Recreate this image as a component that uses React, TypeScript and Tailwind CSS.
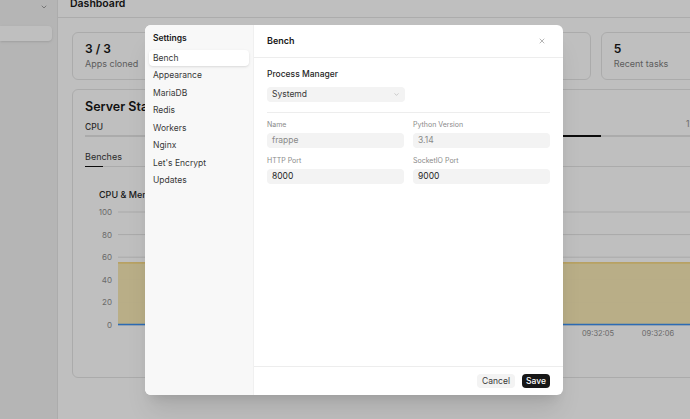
import { ChevronDown, X } from "lucide-react";

const settingsNav = ["Bench", "Appearance", "MariaDB", "Redis", "Workers", "Nginx", "Let's Encrypt", "Updates"];

const stats = [
  { value: "3 / 3", label: "Apps cloned" },
  { value: "2", label: "Sites" },
  { value: "1", label: "Benches" },
  { value: "5", label: "Recent tasks" },
];

function Chart() {
  const top = 7;
  const step = 22.6;
  const ticks = [100, 80, 60, 40, 20, 0];
  const base = top + step * 5;
  const fillTop = base - 55 * (step / 20);
  return (
    <svg width="700" height="140" className="block">
      {ticks.map((t, i) => (
        <g key={t}>
          <line x1="33" x2="700" y1={top + i * step} y2={top + i * step} stroke="#e2e2e2" strokeWidth="1" />
          <text x="27" y={top + i * step + 3} textAnchor="end" fontSize="8" fill="#8e8e8e">
            {t}
          </text>
        </g>
      ))}
      <rect x="33" y={fillTop} width="667" height={base - fillTop} fill="#f7e7b1" opacity="0.95" />
      <line x1="33" x2="700" y1={fillTop} y2={fillTop} stroke="#f2c44a" strokeWidth="1" />
      <line x1="33" x2="700" y1={base - 0.5} y2={base - 0.5} stroke="#3b8ff0" strokeWidth="1.3" />
      <text x="513" y="131" textAnchor="middle" fontSize="7.5" fill="#8e8e8e">09:32:05</text>
      <text x="573" y="131" textAnchor="middle" fontSize="7.5" fill="#8e8e8e">09:32:06</text>
    </svg>
  );
}

function Dashboard() {
  return (
    <div className="flex h-full w-full">
      {/* sidebar */}
      <aside className="w-[58px] shrink-0 border-r border-[#e6e6e6] bg-[#f2f2f2]">
        <div className="flex h-[18px] items-start justify-end pr-[9px] pt-[3px] text-[#555]">
          <ChevronDown size={8} strokeWidth={1.6} />
        </div>
        <div className="mt-[8px] h-[15px] w-[52px] rounded-r-[4px] bg-white shadow-sm" />
      </aside>

      {/* main */}
      <main className="flex w-[760px] shrink-0 flex-col bg-white">
        <div className="h-[18px] border-b border-[#e6e6e6] pl-[12px]">
          <div className="-mt-[2px] text-[10.5px] leading-[12px] font-semibold text-[#171717]">Dashboard</div>
        </div>

        <div className="pl-[14px] pt-[14px]">
          <div className="grid w-[695px] grid-cols-4 gap-[10px]">
            {stats.map((s) => (
              <div key={s.label} className="h-[48px] rounded-[6px] border border-[#e5e5e5] px-[12px] pt-[9px]">
                <div className="text-[12px] leading-[14px] font-semibold text-[#171717]">{s.value}</div>
                <div className="mt-[2px] text-[9px] leading-[12px] text-[#7c7c7c]">{s.label}</div>
              </div>
            ))}
          </div>

          <div className="mt-[9px] h-[289px] w-[695px] rounded-[6px] border border-[#e5e5e5] px-[12px] pt-[9px]">
            <div className="text-[12.5px] leading-[16px] font-semibold text-[#171717]">Server Stats</div>
            <div className="mt-[6px] flex text-[8.5px] leading-[12px]">
              <span className="w-[601px] font-medium text-[#383838]">CPU</span>
              <span className="-mt-[3px] text-[#8e8e8e]">12%</span>
            </div>
            <div className="mt-[2px] flex h-[1.5px]">
              <div className="w-[478px] bg-[#e5e5e5]" />
              <div className="w-[38px] bg-[#111]" />
              <div className="flex-1 bg-[#e5e5e5]" />
            </div>

            <div className="mt-[14px] text-[9px] leading-[12px] text-[#383838]">Benches</div>
            <div className="mt-[3px] flex h-[1.5px]">
              <div className="w-[18px] bg-[#111]" />
              <div className="flex-1 bg-[#e5e5e5]" />
            </div>

            <div className="mt-[22px] pl-[14px] text-[9px] leading-[12px] font-medium text-[#262626]">CPU &amp; Memory</div>
            <div className="mt-[4px]">
              <Chart />
            </div>
          </div>
        </div>
      </main>
    </div>
  );
}

function Field({ label, value, disabled }: { label: string; value: string; disabled?: boolean }) {
  return (
    <div>
      <div className="text-[7px] leading-[10px] text-[#8a8a8a]">{label}</div>
      <div
        className={`mt-[3px] flex h-[15px] items-center rounded-[4px] bg-[#f3f3f3] px-[5px] text-[8.5px] ${
          disabled ? "text-[#8a8a8a]" : "text-[#262626]"
        }`}
      >
        {value}
      </div>
    </div>
  );
}

function SettingsModal() {
  return (
    <div className="absolute left-[145px] top-[25px] flex h-[370px] w-[418px] overflow-hidden rounded-[6px] bg-white shadow-xl">
      <div className="w-[109px] shrink-0 border-r border-[#f0f0f0] bg-[#f8f8f8] px-[4px] pt-[5px]">
        <div className="mb-[4px] flex h-[16px] items-center px-[4px] text-[8.5px] font-semibold text-[#171717]">Settings</div>
        {settingsNav.map((item, i) => (
          <div
            key={item}
            className={`mb-[1.5px] flex h-[16px] items-center rounded-[4px] px-[4px] text-[8.5px] text-[#383838] ${
              i === 0 ? "bg-white shadow-sm" : ""
            }`}
          >
            {item}
          </div>
        ))}
      </div>

      <div className="flex flex-1 flex-col">
        <div className="flex h-[33px] shrink-0 items-center justify-between border-b border-[#ededed] pl-[13px] pr-[17px]">
          <span className="text-[9px] font-semibold text-[#171717]">Bench</span>
          <X size={8} strokeWidth={1.5} className="text-[#6b6b6b]" />
        </div>

        <div className="flex-1 px-[13px] pt-[10px]">
          <div className="text-[8.5px] leading-[12px] font-medium text-[#262626]">Process Manager</div>
          <div className="mt-[7px] flex h-[15px] w-[138px] items-center justify-between rounded-[4px] bg-[#f3f3f3] pl-[5px] pr-[5px] text-[8.5px] text-[#383838]">
            <span>Systemd</span>
            <ChevronDown size={7} strokeWidth={1.5} className="text-[#9a9a9a]" />
          </div>
          <div className="mt-[10px] h-px bg-[#ededed]" />
          <div className="mt-[7px] grid grid-cols-2 gap-x-[9px] gap-y-[8px]">
            <Field label="Name" value="frappe" disabled />
            <Field label="Python Version" value="3.14" disabled />
            <Field label="HTTP Port" value="8000" />
            <Field label="SocketIO Port" value="9000" />
          </div>
        </div>

        <div className="flex h-[29px] shrink-0 items-center justify-end gap-[7px] border-t border-[#ededed] pr-[13px]">
          <button className="flex h-[14px] w-[38px] items-center justify-center rounded-[4px] bg-[#f3f3f3] text-[8.5px] text-[#383838]">
            Cancel
          </button>
          <button className="flex h-[14px] w-[28px] items-center justify-center rounded-[4px] bg-[#171717] text-[8.5px] font-medium text-white">
            Save
          </button>
        </div>
      </div>
    </div>
  );
}

export default function App() {
  return (
    <div className="relative h-[419px] w-[690px] overflow-hidden font-[Inter,'Noto_Sans',sans-serif]">
      <Dashboard />
      <div className="absolute inset-0 bg-black/25" />
      <SettingsModal />
    </div>
  );
}
